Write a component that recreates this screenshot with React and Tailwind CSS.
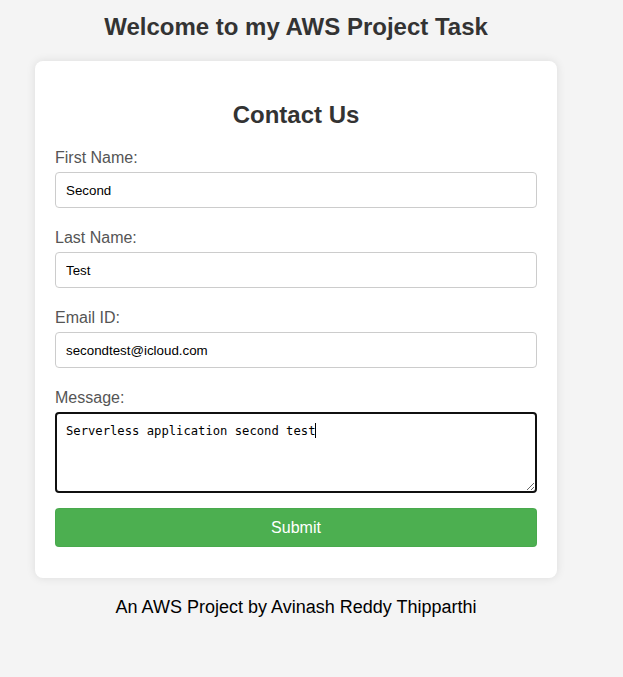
import React, { useState } from "react";

export default function App() {
  const [form, setForm] = useState({
    firstName: "Second",
    lastName: "Test",
    email: "secondtest@icloud.com",
    message: "Serverless application second test",
  });

  const handleChange = (e) => {
    const { name, value } = e.target;
    setForm((prev) => ({ ...prev, [name]: value }));
  };

  const inputClass =
    "block w-full h-[36px] px-[10px] border border-[#ccc] rounded-[4px] bg-white text-[13.33px] text-black outline-none";
  const labelClass = "block text-[16px] leading-[18px] text-[#555] pt-px mb-[5px]";

  return (
    <div className="min-h-screen bg-[#f4f4f4] font-['Liberation_Sans',Arial,sans-serif]">
      <div className="ml-[35px] w-[522px] pt-[13px]">
        <h1 className="text-center text-[24px] font-bold leading-[28px] text-[#333]">
          Welcome to my AWS Project Task
        </h1>

        {/* Card */}
        <div className="mt-[20px] bg-white rounded-[8px] shadow-[0_0_10px_rgba(0,0,0,0.1)] px-[20px] pt-[40px] pb-[31px]">
          <h2 className="text-center text-[24px] font-bold leading-[27px] text-[#333] mb-[20px]">
            Contact Us
          </h2>

          <form onSubmit={(e) => e.preventDefault()}>
            <label className={labelClass}>First Name:</label>
            <input
              name="firstName"
              value={form.firstName}
              onChange={handleChange}
              className={inputClass + " mb-[20px]"}
            />

            <label className={labelClass}>Last Name:</label>
            <input
              name="lastName"
              value={form.lastName}
              onChange={handleChange}
              className={inputClass + " mb-[20px]"}
            />

            <label className={labelClass}>Email ID:</label>
            <input
              name="email"
              value={form.email}
              onChange={handleChange}
              className={inputClass + " mb-[20px]"}
            />

            <label className={labelClass}>Message:</label>
            <div className="relative mb-[15px]">
              <textarea
                name="message"
                value={form.message}
                onChange={handleChange}
                className="block w-full h-[81px] px-[9px] pt-[10px] pb-[8px] border-2 border-[#101010] rounded-[4px] bg-white text-[12.2px] leading-[15px] text-black outline-none font-['DejaVu_Sans_Mono',monospace]"
              />
              {/* caret */}
              <span className="absolute left-[260px] top-[11px] h-[15px] w-px bg-black" />
            </div>

            <button
              type="submit"
              className="block w-full h-[39px] bg-[#4caf50] text-white text-[16px] rounded-[4px] border border-[#45a049]/40"
            >
              Submit
            </button>
          </form>
        </div>

        <p className="mt-[19px] text-center text-[18px] leading-[20px] text-black">
          An AWS Project by Avinash Reddy Thipparthi
        </p>
      </div>
    </div>
  );
}
